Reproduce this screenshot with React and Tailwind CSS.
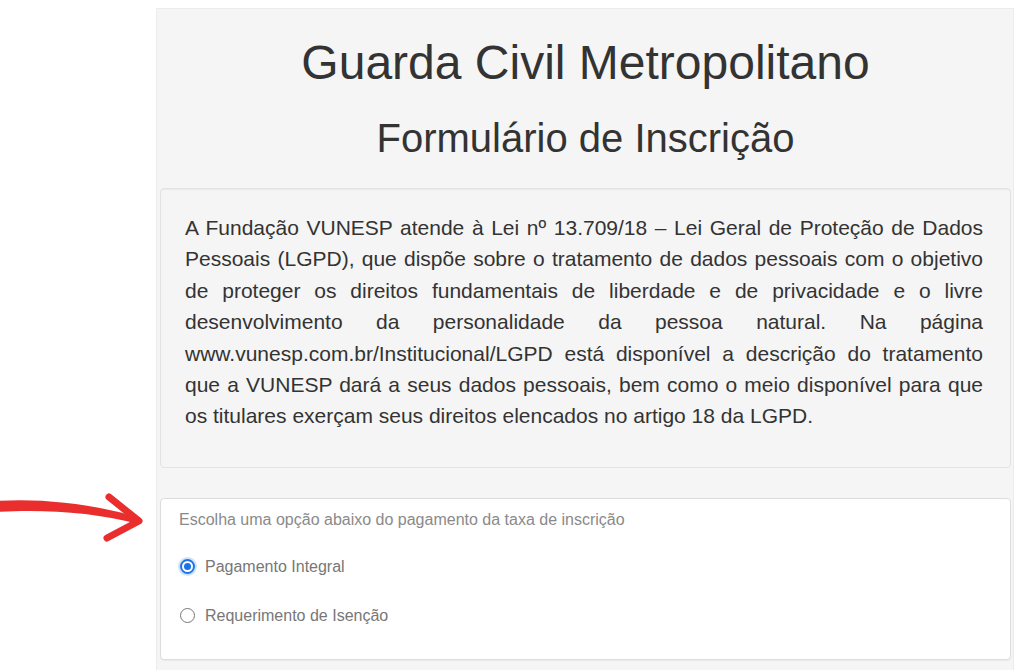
export default function App() {
  return (
    <div className="relative min-h-[670px] bg-white font-['Liberation_Sans',Arial,sans-serif] pl-[156px] pr-[10px] pt-[8px] overflow-hidden">
      {/* annotation arrow */}
      <svg className="absolute left-0 top-[490px]" width="150" height="60" viewBox="0 0 150 60" fill="none">
        <path d="M-2 11 C 40 8, 95 14, 141 28 L 139 34 C 95 22, 40 19, -2 22 Z" fill="#ea2d2d" />
        <path d="M109 7 L139 31 L107 48" stroke="#ea2d2d" strokeWidth="7" strokeLinecap="round" strokeLinejoin="round" />
      </svg>

      <div className="w-[858px] min-h-[662px] bg-[#f5f5f5] border border-[#ececec] pl-[3px] pr-[2px] pb-[10px]">
        <h1 className="text-center text-[48px] leading-[56px] text-[#333] pt-[26px]">Guarda Civil Metropolitano</h1>
        <h2 className="text-center text-[40px] leading-[48px] text-[#333] mt-[23px]">Formulário de Inscrição</h2>

        <div className="mt-[26px] bg-[#f5f5f5] border border-[#e3e3e3] rounded-[4px] shadow-[inset_0_1px_1px_rgba(0,0,0,0.05)] pl-[24px] pr-[27px] pt-[23px] pb-[35px]">
          <p className="text-[21px] leading-[31.4px] text-[#333] text-justify">
            A Fundação VUNESP atende à Lei nº 13.709/18 – Lei Geral de Proteção de Dados Pessoais (LGPD), que dispõe sobre o tratamento de dados pessoais com o objetivo de proteger os direitos fundamentais de liberdade e de privacidade e o livre desenvolvimento da personalidade da pessoa natural. Na página www.vunesp.com.br/Institucional/LGPD está disponível a descrição do tratamento que a VUNESP dará a seus dados pessoais, bem como o meio disponível para que os titulares exerçam seus direitos elencados no artigo 18 da LGPD.
          </p>
        </div>

        <div className="mt-[30px] bg-white border border-[#dddddd] rounded-[4px] shadow-[0_1px_1px_rgba(0,0,0,0.05)] px-[18px] pt-[11px] pb-[33px]">
          <p className="text-[16px] leading-[20px] text-[#8a8a8a]">Escolha uma opção abaixo do pagamento da taxa de inscrição</p>
          <div className="flex flex-col gap-[29px] mt-[27px] pl-[1px]">
            <label className="flex items-center gap-[10px] text-[16px] leading-[20px] text-[#777]">
              <span className="w-[15px] h-[15px] rounded-full border-[2px] border-[#1a73e8] ring-[2px] ring-[#1a73e8]/20 flex items-center justify-center">
                <span className="w-[7px] h-[7px] rounded-full bg-[#1a73e8]" />
              </span>
              Pagamento Integral
            </label>
            <label className="flex items-center gap-[10px] text-[16px] leading-[20px] text-[#777]">
              <span className="w-[15px] h-[15px] rounded-full border-[1.5px] border-[#777]" />
              Requerimento de Isenção
            </label>
          </div>
        </div>
      </div>
    </div>
  )
}
